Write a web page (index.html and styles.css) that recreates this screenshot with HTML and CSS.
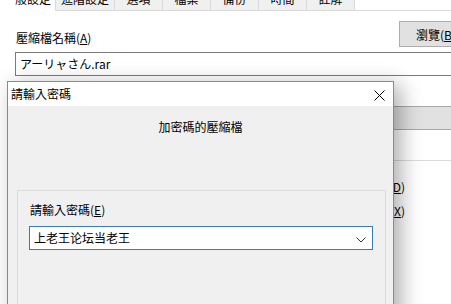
FILE: index.html
```html
<!DOCTYPE html>
<html lang="zh-TW">
<head>
  <meta charset="UTF-8">
  <title>壓縮檔名稱與參數</title>
  <link rel="stylesheet" href="styles.css">
</head>
<body>
  <div class="window">
    <div class="tabs">
      <div class="tab active">一般設定</div>
      <div class="tab">進階設定</div>
      <div class="tab">選項</div>
      <div class="tab">檔案</div>
      <div class="tab">備份</div>
      <div class="tab">時間</div>
      <div class="tab">註解</div>
    </div>
    <div class="page">
      <div class="name-row">
        <label class="name-label">壓縮檔名稱(<u>A</u>)</label>
        <button class="browse">瀏覽(<u>B</u>)...</button>
      </div>
      <div class="name-input">アーリャさん.rar</div>
      <div class="bar"></div>
      <div class="sep"></div>
      <div class="opts">
        <div class="opt">壓縮後刪除檔案(<u>D</u>)</div>
        <div class="opt">建立自解壓縮檔(<u>X</u>)</div>
      </div>
    </div>
  </div>

  <div class="dialog">
    <div class="titlebar">
      <span class="title">請輸入密碼</span>
      <svg class="close" width="11" height="11" viewBox="0 0 11 11">
        <path d="M0.5 0.5 L10.5 10.5 M10.5 0.5 L0.5 10.5" stroke="#000" stroke-width="1" fill="none"/>
      </svg>
    </div>
    <div class="dlg-body">
      <div class="heading">加密碼的壓縮檔</div>
      <div class="group">
        <div class="pw-label">請輸入密碼(<u>E</u>)</div>
        <div class="combo">
          <span class="combo-text" lang="zh-CN">上老王论坛当老王</span>
          <svg class="chevron" width="10" height="6" viewBox="0 0 10 6">
            <polyline points="0.5,0.5 5,5 9.5,0.5" stroke="#333" stroke-width="1" fill="none"/>
          </svg>
        </div>
      </div>
    </div>
  </div>
</body>
</html>
```

FILE: styles.css
```css
body {
  margin: 0;
  background: #fff;
  font-family: "Noto Sans CJK TC", "Noto Sans CJK SC", sans-serif;
  font-size: 12px;
  color: #000;
  overflow: hidden;
  height: 304px;
}
u { text-decoration: underline; text-underline-offset: 1px; }

.window { position: relative; }

.tabs {
  display: flex;
  margin-top: -11px;
  height: 21px;
  border-bottom: 1px solid #d9d9d9;
}
.tab {
  box-sizing: border-box;
  min-width: 48px;
  padding: 0 5px;
  line-height: 20px;
  text-align: center;
  white-space: nowrap;
  background: #f0f0f0;
  border-right: 1px solid #d9d9d9;
}
.tab.active {
  width: 56px;
  padding: 0 4px 0 0;
  overflow: hidden;
  text-align: right;
  direction: rtl;
  background: #fff;
  height: 22px;
}

.page { padding-left: 15px; }

.name-row {
  display: flex;
  align-items: flex-end;
  justify-content: space-between;
  margin-top: 10px;
}
.name-label {
  padding-left: 1px;
  line-height: 16px;
  margin-bottom: 1px;
}
.browse {
  width: 84px;
  height: 26px;
  margin-right: -32px;
  padding: 0;
  font: inherit;
  text-align: center;
  background: #e1e1e1;
  border: 1px solid #adadad;
}

.name-input {
  box-sizing: border-box;
  margin-top: 5px;
  margin-right: -4px;
  height: 24px;
  line-height: 22px;
  padding-left: 4px;
  border: 1px solid #7a7a7a;
}

.bar {
  margin-top: 30px;
  height: 22px;
  background: #e1e1e1;
  border-top: 1px solid #a8a8a8;
  border-bottom: 1px solid #a8a8a8;
}

.sep {
  margin-top: 30px;
  border-top: 1px solid #dcdcdc;
}

.opts {
  width: 390px;
  margin-top: 14px;
  text-align: right;
}
.opt { line-height: 24px; }

.dialog {
  position: absolute;
  left: 7px;
  top: 81px;
  box-sizing: border-box;
  width: 387px;
  height: 250px;
  background: #f0f0f0;
  border: 1px solid #8a8a8a;
  box-shadow: 7px 4px 20px rgba(0, 0, 0, 0.32);
}
.titlebar {
  display: flex;
  align-items: center;
  justify-content: space-between;
  height: 24px;
  background: #fff;
  padding: 0 8px 0 3px;
}
.title { line-height: 16px; }
.close { margin-top: 2px; margin-right: 0; }

.dlg-body { padding-top: 13px; }
.heading {
  text-align: center;
  line-height: 16px;
}
.group {
  margin: 55px 7px 0 9px;
  height: 120px;
  border: 1px solid #dcdcdc;
  padding: 11px 0 0 11px;
}
.pw-label {
  line-height: 16px;
  padding-left: 1px;
}
.combo {
  box-sizing: border-box;
  display: flex;
  align-items: center;
  justify-content: space-between;
  margin-top: 8px;
  width: 344px;
  height: 24px;
  background: #fff;
  border: 1px solid #3a7cb0;
  padding: 0 6px 0 4px;
}
.combo-text { line-height: 20px; }
.chevron { margin-top: 3px; }
```
